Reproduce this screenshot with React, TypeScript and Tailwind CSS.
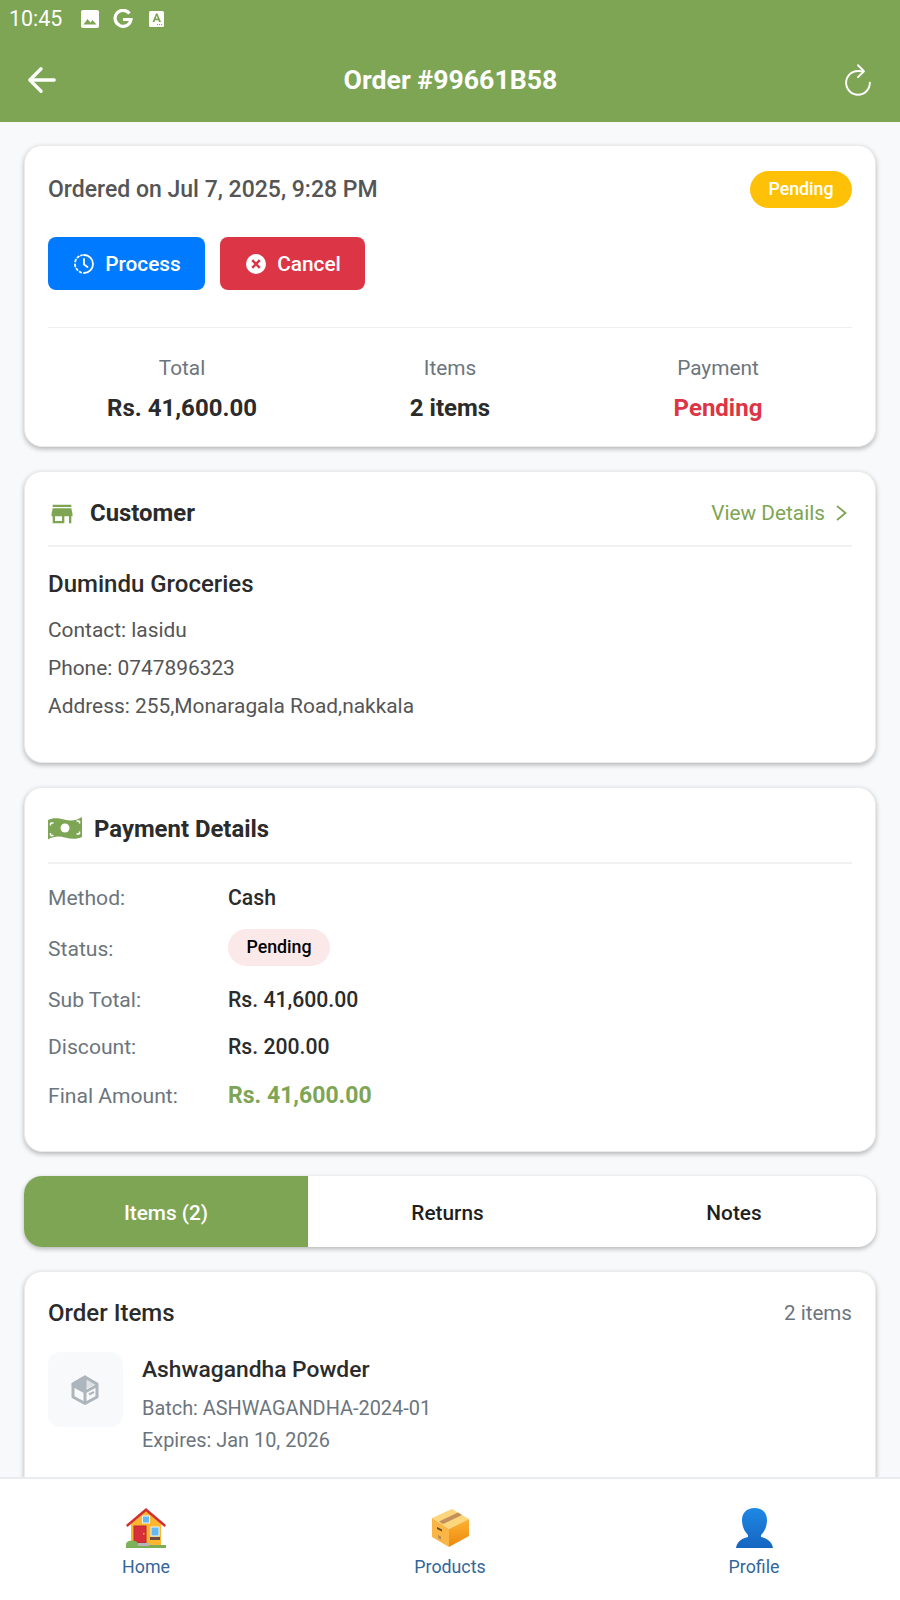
import React from "react";

const font = { fontFamily: "Roboto, sans-serif" };

function Card({ className, children }: { className?: string; children: React.ReactNode }) {
  return (
    <div className={"rounded-[18px] border border-[#ebebeb] bg-white mx-6 px-[23px] shadow-[0_2px_5px_rgba(0,0,0,0.28)] " + (className || "")}>
      {children}
    </div>
  );
}

function Store() {
  return (
    <svg width="28" height="28" viewBox="0 0 24 24" fill="#7ea554"><path d="M20 4H4v2h16V4zm1 10v-2l-1-5H4l-1 5v2h1v6h10v-6h4v6h2v-6h1zm-9 4H6v-4h6v4z" /></svg>
  );
}

function Money() {
  return (
    <svg width="34" height="24" viewBox="0 0 34 24" className="block -mt-[4px]">
      <path d="M0 4c5-2.500 10-2 16-.5s12 1.500 18-2.500v20c-5 2.500-11 2-17 .5S6 20 0 23.500z" fill="#7ea554" />
      <circle cx="17" cy="12" r="4.500" fill="#fff" />
      <path d="M2.500 7h3M2.500 7v2.500M28.500 5h3M31.500 5v2.500M2.500 19.500h3M2.500 19.500v-2.500M28.500 18h3M31.500 18v-2.500" stroke="#fff" strokeWidth="1.500" fill="none" />
    </svg>
  );
}

function House() {
  return (
    <svg width="40" height="40" viewBox="0 0 40 40">
      <path d="M5 16 20 3l15 13v22H5z" fill="#ffb52e" />
      <path d="M0 17 20 0l20 17-1.500 2L20 3.500 1.500 19z" fill="#d32f2f" />
      <rect x="8" y="18" width="12" height="17" fill="#d8303a" stroke="#b72a30" />
      <rect x="17" y="25" width="1.500" height="1.500" fill="#fdb92c" />
      <rect x="25" y="19" width="8" height="9" fill="#64b9f2" stroke="#e8f4fb" />
      <rect x="24" y="29" width="10" height="3" fill="#6d4c41" />
      <rect x="16.500" y="8" width="7" height="7" fill="#64b9f2" stroke="#e8f4fb" />
      <rect x="0" y="37" width="40" height="3" fill="#7cad55" />
      <ellipse cx="6" cy="36" rx="6" ry="3.500" fill="#7cb35a" />
      <rect x="12" y="35" width="11" height="3" fill="#b5b5b5" />
    </svg>
  );
}

function Box() {
  return (
    <svg width="37" height="38" viewBox="0 0 37 38">
      <defs>
        <linearGradient id="b" x1="0" y1="0" x2="0" y2="1">
          <stop offset="0" stopColor="#fdb236" />
          <stop offset="1" stopColor="#ec8a0c" />
        </linearGradient>
      </defs>
      <path d="M0 9 20 0l17 10-20 10z" fill="#fbd67c" />
      <path d="M0 9l17 11v18L0 28z" fill="#f9b545" />
      <path d="M17 20l20-10v17L17 38z" fill="url(#b)" />
      <path d="M7 12.500 26 3.500l4 2.500-19 9z" fill="#c48f58" />
      <path d="M5 18l5 2.500v2L5 20z" fill="#6b4a24" />
      <path d="M6 26l3 1.500v3l-3-1.500z" fill="#b98c55" />
    </svg>
  );
}

function Person() {
  return (
    <svg width="37" height="40" viewBox="0 0 37 40">
      <defs>
        <linearGradient id="p" x1="0" y1="0" x2="0" y2="1">
          <stop offset="0" stopColor="#1e88e5" />
          <stop offset="1" stopColor="#1565c0" />
        </linearGradient>
      </defs>
      <path d="M18.500 0c8 0 12.500 5 12.500 12 0 6-2 11-6 15v2c5 1 11 4 12 11H0c1-7 7-10 12-11v-2C8 23 6 18 6 12 6 5 10.500 0 18.500 0z" fill="url(#p)" />
    </svg>
  );
}

function NavItem({ icon, label }: { icon: React.ReactNode; label: string }) {
  return (
    <div className="flex-1 flex flex-col items-center">
      <div className="h-[42px] flex items-center justify-center">{icon}</div>
      <div className="text-[17.800px] leading-[19px] text-[#336699] mt-[8px]">{label}</div>
    </div>
  );
}

function Row({ label, children, mt }: { label: string; children: React.ReactNode; mt: string }) {
  return (
    <div className={"flex items-center " + mt}>
      <div className="w-[180px] text-[21.100px] leading-[24px] text-[#6c757d]">{label}</div>
      {children}
    </div>
  );
}

const value = "text-[21.200px] leading-[24px] font-medium text-[#2b2b2b]";

export default function App() {
  return (
    <div className="w-[900px] h-[1600px] overflow-hidden flex flex-col bg-[#f8f9fa]" style={font}>
      <div className="h-[122px] shrink-0 bg-[#7ea554] flex flex-col text-white">
        <div className="h-[38px] flex items-center pl-[9px]">
          <span className="text-[21.400px] leading-none w-[72px]">10:45</span>
          <svg width="18" height="18" viewBox="0 0 18 18"><rect width="18" height="18" rx="2" fill="#fff" /><path d="M2.500 14.500 6.500 9l3 3.500 2-2.500 4 4.500z" fill="#7ea554" /></svg>
          <svg width="20" height="20" viewBox="0 0 20 20" className="ml-[14px]" fill="none" stroke="#fff" strokeWidth="3.200"><path d="M16.500 4.500A8 8 0 1 0 18 10.500H10" /></svg>
          <svg width="15" height="16" viewBox="0 0 15 16" className="ml-[16px]"><rect width="15" height="16" rx="1.500" fill="#fff" /><path d="M3.500 11 7 2.500h1.500L12 11h-2l-.7-1.800H6.200L5.500 11zM6.800 7.500h2L7.800 4.800z" fill="#7ea554" /><path d="M8 13.500h1M10 13.500h1M12 13.500h1" stroke="#7ea554" strokeWidth="1" /></svg>
        </div>
        <div className="flex-1 flex items-center justify-between pl-[22px] pr-[23px]">
          <svg width="40" height="40" viewBox="0 0 512 512" fill="none" stroke="#fff" strokeWidth="42" strokeLinecap="round" strokeLinejoin="round"><path d="M244 400 100 256l144-144M120 256h292" /></svg>
          <div className="text-[26.700px] leading-[30px] font-bold">Order #99661B58</div>
          <svg width="38" height="38" viewBox="0 0 512 512" fill="none" stroke="#fff" strokeWidth="26" strokeLinecap="round" strokeLinejoin="round"><path d="M320 146s24.360-12-64-12a160 160 0 1 0 160 160" /><path d="m256 58 80 80-80 80" /></svg>
        </div>
      </div>

      <div className="flex-1 min-h-0 overflow-hidden pt-[23px] flex flex-col gap-6">
        <Card className="h-[302px] shrink-0 pt-6">
          <div className="flex items-center justify-between">
            <div className="text-[23px] leading-[36px] pt-[2px] font-medium text-[#555555]">Ordered on Jul 7, 2025, 9:28 PM</div>
            <div className="h-[37px] w-[102px] pt-[1px] rounded-full bg-[#ffc107] text-white text-[17.800px] font-medium flex items-center justify-center">Pending</div>
          </div>
          <div className="flex gap-[15px] mt-[29px]">
            <div className="h-[53px] w-[157px] pl-[2px] pt-[2px] rounded-[8px] bg-[#007bff] flex items-center justify-center gap-[11px] text-white text-[20.800px] font-medium">
              <svg width="20" height="20" viewBox="0 0 20 20" fill="none" stroke="#fff" strokeWidth="1.800" strokeLinecap="round" className="-mt-[2px]"><path d="M10 1a9 9 0 0 1 0 18M7 18.500l-1.300-.7M3.500 16l-1-1.300M1.300 12.500 1 10.500M1.200 7.500l.7-1.800M3.500 3.500l1.300-1M7 1.500 8 1.200" /><path d="M10 5v5.500l3.500 2.500" /></svg>
              Process
            </div>
            <div className="h-[53px] w-[145px] pl-[2px] pt-[2px] rounded-[8px] bg-[#dc3545] flex items-center justify-center gap-[11px] text-white text-[20.800px] font-medium">
              <svg width="20" height="20" viewBox="0 0 20 20" className="-mt-[2px]"><circle cx="10" cy="10" r="10" fill="#fff" /><path d="M6.200 6.200l7.600 7.600M13.800 6.200l-7.600 7.600" stroke="#dc3545" strokeWidth="2.400" /></svg>
              Cancel
            </div>
          </div>
          <div className="border-t border-[#eeeeee] mt-[37px] flex pt-[27px]">
            {[
              ["Total", "Rs. 41,600.00", "text-[#2b2b2b]"],
              ["Items", "2 items", "text-[#2b2b2b]"],
              ["Payment", "Pending", "text-[#dc3545]"],
            ].map(([a, b, c]) => (
              <div key={a} className="flex-1 text-center">
                <div className="text-[20.800px] leading-[26px] text-[#6c757d]">{a}</div>
                <div className={"text-[24px] leading-[30px] font-bold mt-[12px] " + c}>{b}</div>
              </div>
            ))}
          </div>
        </Card>

        <Card className="h-[292px] shrink-0 pt-[18px]">
          <div className="flex items-center justify-between border-b-2 border-[#f1f1f1] h-[57px] pb-[7px]">
            <div className="flex items-center">
              <Store />
              <span className="ml-[14px] text-[23.900px] font-bold text-[#2b2b2b]">Customer</span>
            </div>
            <div className="flex items-center text-[20.800px] text-[#7ea554]">
              View Details
              <svg width="11" height="16" viewBox="0 0 11 16" fill="none" stroke="#7ea554" strokeWidth="1.800" className="ml-[11px] mr-[5px] -mt-[2px]"><path d="M1 1l8.500 7L1 15" /></svg>
            </div>
          </div>
          <div className="text-[24px] leading-[30px] font-medium text-[#2b2b2b] mt-[22px]">Dumindu Groceries</div>
          <div className="text-[20.900px] leading-[38px] text-[#555555] mt-[12px]">
            <div>Contact: lasidu</div>
            <div>Phone: 0747896323</div>
            <div>Address: 255,Monaragala Road,nakkala</div>
          </div>
        </Card>

        <Card className="h-[365px] shrink-0 pt-[17px]">
          <div className="flex items-center border-b-2 border-[#f1f1f1] h-[59px] pb-[8px]">
            <Money />
            <span className="ml-[12px] text-[23.900px] font-bold text-[#2b2b2b]">Payment Details</span>
          </div>
          <Row label="Method:" mt="mt-[22px]"><span className={value}>Cash</span></Row>
          <Row label="Status:" mt="mt-[19px]">
            <div className="h-[37px] w-[102px] mb-[2px] rounded-full bg-[#fbe9ea] text-black text-[17.800px] font-medium flex items-center justify-center">Pending</div>
          </Row>
          <Row label="Sub Total:" mt="mt-[20px]"><span className={value}>Rs. 41,600.00</span></Row>
          <Row label="Discount:" mt="mt-[23px]"><span className={value}>Rs. 200.00</span></Row>
          <Row label="Final Amount:" mt="mt-[25px]"><span className="text-[23px] leading-[24px] font-bold text-[#7ea554]">Rs. 41,600.00</span></Row>
        </Card>

        <div className="mx-6 h-[71px] shrink-0 rounded-[18px] bg-white shadow-[0_2px_5px_rgba(0,0,0,0.28)] flex overflow-hidden text-[20.800px] font-medium text-[#1f1f1f]">
          <div className="w-[284px] pt-[4px] bg-[#7ea554] text-white flex items-center justify-center">Items (2)</div>
          <div className="w-[279px] pt-[4px] flex items-center justify-center">Returns</div>
          <div className="w-[284px] pt-[4px] ml-[5px] flex items-center justify-center">Notes</div>
        </div>

        <Card className="h-[300px] shrink-0 pt-[25px]">
          <div className="flex items-center justify-between">
            <span className="text-[24px] leading-[32px] font-medium text-[#2b2b2b]">Order Items</span>
            <span className="text-[20.600px] text-[#6c757d]">2 items</span>
          </div>
          <div className="flex mt-[23px]">
            <div className="w-[75px] h-[75px] rounded-[12px] bg-[#f8f9fa] flex items-center justify-center">
              <svg width="30" height="30" viewBox="0 0 30 30" fill="none" stroke="#adb5bd" strokeWidth="3" strokeLinejoin="round" className="-ml-[2px]"><path d="M15 2 3 9v13l12 6.500L27 22V9z" /><path d="M3 10.500 15 17l12-6.500M15 17v11" /><path d="M15 2 3 9l12 7z" fill="#adb5bd" /><path d="M15 2v12l12-5z" fill="#adb5bd" stroke="none" opacity="0.35" /><path d="M19 19.500l5-2.500" strokeWidth="2" /></svg>
            </div>
            <div className="ml-[19px]">
              <div className="text-[22.800px] leading-[30px] font-medium text-[#2b2b2b] mt-[3px]">Ashwagandha Powder</div>
              <div className="text-[19.900px] leading-[32px] text-[#6c757d] mt-[8px]">
                <div>Batch: ASHWAGANDHA-2024-01</div>
                <div>Expires: Jan 10, 2026</div>
              </div>
            </div>
          </div>
        </Card>
      </div>

      <div className="h-[123px] shrink-0 bg-white border-t-2 border-[#e9ecef] flex pt-[28px] relative z-10">
        <div className="w-[292px]"><NavItem icon={<House />} label="Home" /></div>
        <div className="w-[316px]"><NavItem icon={<Box />} label="Products" /></div>
        <div className="w-[292px]"><NavItem icon={<Person />} label="Profile" /></div>
      </div>
    </div>
  );
}
